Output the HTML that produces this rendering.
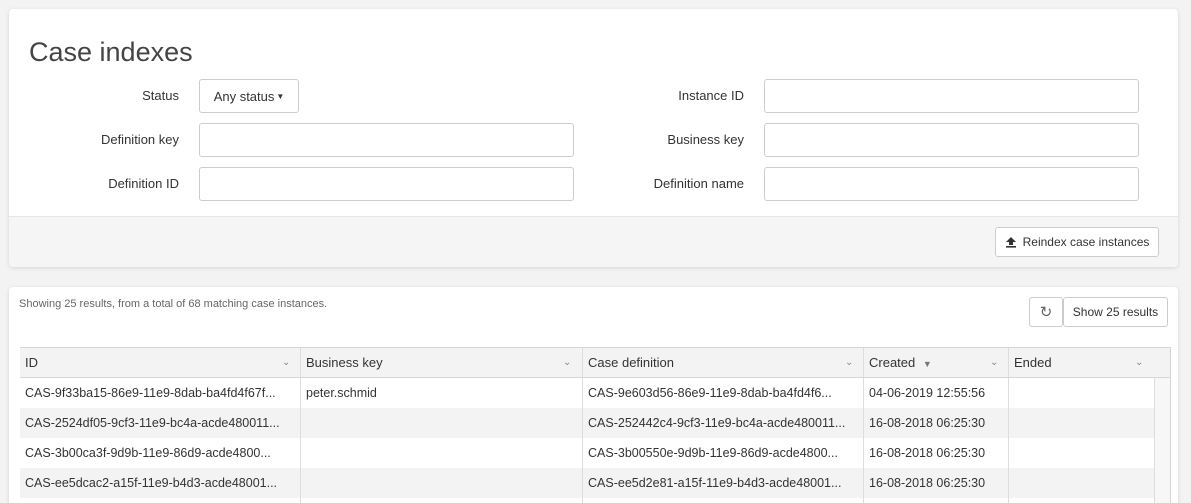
<!DOCTYPE html>
<html><head><style>
*{box-sizing:border-box;margin:0;padding:0}
html,body{width:1191px;height:503px;overflow:hidden}
body{background:#f3f3f3;font-family:"Liberation Sans",sans-serif;color:#333;position:relative}
.card{position:absolute;background:#fff;border-radius:4px;box-shadow:0 1px 4px rgba(0,0,0,.12)}
.a{position:absolute}
.lbl{position:absolute;font-size:13px;text-align:right;width:160px;color:#333}
.inp{position:absolute;height:34px;border:1px solid #ccc;border-radius:3px;background:#fff}
.btn{position:absolute;border:1px solid #ccc;border-radius:3px;background:#fff;font-size:12px;color:#333;display:flex;align-items:center;justify-content:center}
.row{position:absolute;left:20px;width:1135px;height:30px;font-size:12.5px;line-height:30px}
.c{position:absolute;top:0;height:100%;padding-left:5px;border-right:1px solid #ddd;white-space:nowrap;overflow:hidden}
.chev{position:absolute;font-size:10px;color:#888;top:0}
</style></head><body>
<div class="card" style="left:9px;top:9px;width:1169px;height:258px;overflow:hidden">
  <div class="a" style="left:20px;top:28px;font-size:27px;color:#444;font-weight:300">Case indexes</div>
  <div class="lbl" style="left:10px;top:79px">Status</div>
  <div class="btn" style="left:190px;top:70px;width:100px;height:34px;font-size:13px">Any status<span style="font-size:8px;margin-left:2px">▼</span></div>
  <div class="lbl" style="left:10px;top:123px">Definition key</div>
  <div class="inp" style="left:190px;top:114px;width:375px"></div>
  <div class="lbl" style="left:10px;top:167px">Definition ID</div>
  <div class="inp" style="left:190px;top:158px;width:375px"></div>
  <div class="lbl" style="left:575px;top:79px">Instance ID</div>
  <div class="inp" style="left:755px;top:70px;width:375px"></div>
  <div class="lbl" style="left:575px;top:123px">Business key</div>
  <div class="inp" style="left:755px;top:114px;width:375px"></div>
  <div class="lbl" style="left:575px;top:167px">Definition name</div>
  <div class="inp" style="left:755px;top:158px;width:375px"></div>
  <div class="a" style="left:0;top:207px;width:1169px;height:51px;background:#f5f5f5;border-top:1px solid #e6e6e6"></div>
  <div class="btn" style="left:986px;top:218px;width:164px;height:30px"><svg width="12" height="12" viewBox="0 0 12 12" style="margin-right:6px"><path d="M6 1 L11 6 H8 V9 H4 V6 H1 Z" fill="#333"/><rect x="1" y="10" width="10" height="1.6" fill="#333"/></svg>Reindex case instances</div>
</div>
<div class="card" style="left:9px;top:287px;width:1169px;height:230px">
  <div class="a" style="left:10px;top:11px;font-size:11px;color:#666">Showing 25 results, from a total of 68 matching case instances.</div>
  <div class="btn" style="left:1020px;top:10px;width:34px;height:30px;font-size:15px;color:#666">↻</div>
  <div class="btn" style="left:1054px;top:10px;width:105px;height:30px">Show 25 results</div>
</div>
<div class="a" style="left:20px;top:347px;width:1151px;height:160px;border:1px solid #d6d6d6;border-bottom:none"></div>
<div class="row" style="top:348px;width:1150px;background:#f3f3f3;height:30px;border-bottom:1px solid #d6d6d6;font-size:13px">
  <div class="c" style="left:0;width:281px">ID<span class="chev" style="left:262px">⌄</span></div>
  <div class="c" style="left:281px;width:282px">Business key<span class="chev" style="left:262px">⌄</span></div>
  <div class="c" style="left:563px;width:281px">Case definition<span class="chev" style="left:262px">⌄</span></div>
  <div class="c" style="left:844px;width:145px">Created <span style="font-size:9px;color:#777;margin-left:4px">▼</span><span class="chev" style="left:126px">⌄</span></div>
  <div class="c" style="left:989px;width:161px;border-right:none">Ended<span class="chev" style="left:126px">⌄</span></div>
</div>
<div class="row" style="top:378px;background:#fff">
  <div class="c" style="left:0;width:281px">CAS-9f33ba15-86e9-11e9-8dab-ba4fd4f67f...</div>
  <div class="c" style="left:281px;width:282px">peter.schmid</div>
  <div class="c" style="left:563px;width:281px">CAS-9e603d56-86e9-11e9-8dab-ba4fd4f6...</div>
  <div class="c" style="left:844px;width:145px">04-06-2019 12:55:56</div>
  <div class="c" style="left:989px;width:146px"></div>
</div>
<div class="row" style="top:408px;background:#f3f3f3">
  <div class="c" style="left:0;width:281px">CAS-2524df05-9cf3-11e9-bc4a-acde480011...</div>
  <div class="c" style="left:281px;width:282px"></div>
  <div class="c" style="left:563px;width:281px">CAS-252442c4-9cf3-11e9-bc4a-acde480011...</div>
  <div class="c" style="left:844px;width:145px">16-08-2018 06:25:30</div>
  <div class="c" style="left:989px;width:146px"></div>
</div>
<div class="row" style="top:438px;background:#fff">
  <div class="c" style="left:0;width:281px">CAS-3b00ca3f-9d9b-11e9-86d9-acde4800...</div>
  <div class="c" style="left:281px;width:282px"></div>
  <div class="c" style="left:563px;width:281px">CAS-3b00550e-9d9b-11e9-86d9-acde4800...</div>
  <div class="c" style="left:844px;width:145px">16-08-2018 06:25:30</div>
  <div class="c" style="left:989px;width:146px"></div>
</div>
<div class="row" style="top:468px;background:#f3f3f3">
  <div class="c" style="left:0;width:281px">CAS-ee5dcac2-a15f-11e9-b4d3-acde48001...</div>
  <div class="c" style="left:281px;width:282px"></div>
  <div class="c" style="left:563px;width:281px">CAS-ee5d2e81-a15f-11e9-b4d3-acde48001...</div>
  <div class="c" style="left:844px;width:145px">16-08-2018 06:25:30</div>
  <div class="c" style="left:989px;width:146px"></div>
</div>
<div class="row" style="top:498px;height:5px;background:#fff">
  <div class="c" style="left:0;width:281px"></div>
  <div class="c" style="left:281px;width:282px"></div>
  <div class="c" style="left:563px;width:281px"></div>
  <div class="c" style="left:844px;width:145px"></div>
  <div class="c" style="left:989px;width:146px"></div>
</div>
<div class="a" style="left:1155px;top:378px;width:15px;height:125px;background:#f7f7f7"></div>
</body></html>
